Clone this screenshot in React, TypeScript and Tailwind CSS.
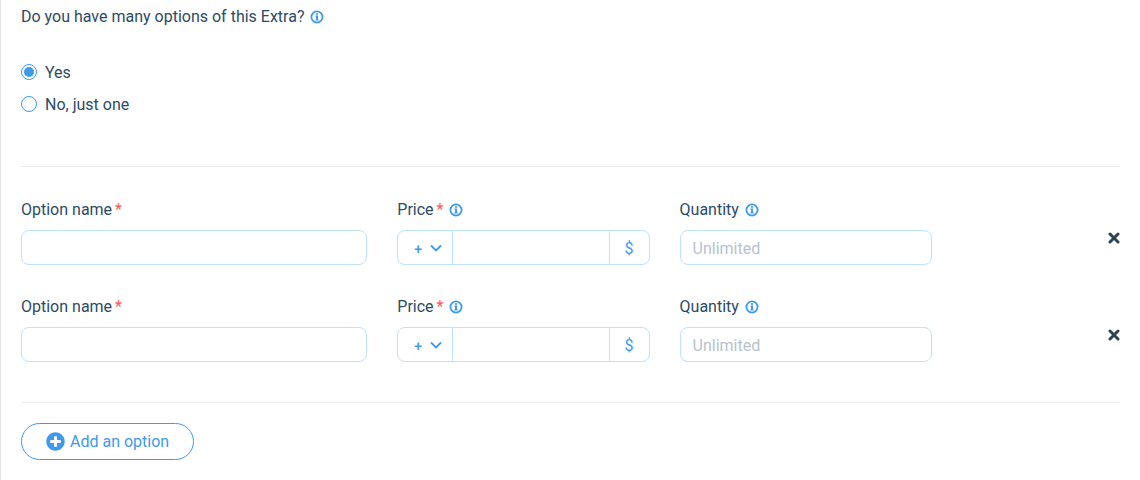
import React, { useId, useState } from "react";
import { FaPlusCircle } from "react-icons/fa";

function InfoIcon() {
  return (
    <svg viewBox="0 0 14 14" className="size-3.5 shrink-0 text-[#3d9aed]" fill="none" role="img" aria-label="More information">
      <circle cx="7" cy="7" r="5.6" stroke="currentColor" strokeWidth="1.8" />
      <path d="M6 3.2h2v1.5H6zM5.4 5.6H8v4h.7v1H5.3v-1H6V6.6h-.6z" fill="currentColor" />
    </svg>
  );
}

function CrossIcon() {
  return (
    <svg viewBox="0 0 12 12" className="size-3" fill="none" stroke="currentColor" strokeWidth="3" strokeLinecap="round" aria-hidden="true">
      <path d="M2 2 10 10M10 2 2 10" />
    </svg>
  );
}

function Required() {
  return <span className="ml-[3px] text-[#ff5656]">*</span>;
}

const field =
  "block h-[35px] w-full min-w-0 rounded-lg border border-[#bfe1fb] bg-white px-3 pt-0.5 text-[#2b4b65] outline-none placeholder:text-[#b8c2ce] focus:border-[#3d9aed]";

function OptionRow({ onRemove }: { onRemove: () => void }) {
  const id = useId();
  return (
    <div className="grid grid-cols-12 gap-x-[30px]">
      <div className="col-span-4">
        <div className="mb-2 flex h-6 items-center">
          <label htmlFor={`${id}-name`}>
            Option name
            <Required />
          </label>
        </div>
        <input id={`${id}-name`} type="text" required className={field} />
      </div>

      <div className="col-span-3">
        <div className="mb-2 flex h-6 items-center gap-1.5">
          <label htmlFor={`${id}-price`}>
            Price
            <Required />
          </label>
          <InfoIcon />
        </div>
        <div className="flex h-[35px] overflow-hidden rounded-lg border border-[#bfe1fb] text-[#3d9aed] focus-within:border-[#3d9aed]">
          <div className="relative w-[55px] shrink-0 border-r border-[#bfe1fb]">
            <select
              aria-label="Price sign"
              className="h-full w-full appearance-none bg-transparent pt-0.5 pl-4 text-sm font-medium outline-none"
            >
              <option>+</option>
              <option>-</option>
            </select>
            <svg
              viewBox="0 0 12 8"
              className="pointer-events-none absolute top-[13px] right-2.5 h-2 w-3"
              fill="none"
              stroke="currentColor"
              strokeWidth="1.8"
              aria-hidden="true"
            >
              <path d="M1 1.5 6 6.5 11 1.5" />
            </svg>
          </div>
          <input
            id={`${id}-price`}
            type="text"
            inputMode="decimal"
            required
            className="min-w-0 flex-1 bg-white px-3 text-[#2b4b65] outline-none"
          />
          <span className="flex w-10 shrink-0 items-center justify-center border-l border-[#bfe1fb] pt-0.5">$</span>
        </div>
      </div>

      <div className="col-span-3">
        <div className="mb-2 flex h-6 items-center gap-1.5">
          <label htmlFor={`${id}-quantity`}>Quantity</label>
          <InfoIcon />
        </div>
        <input id={`${id}-quantity`} type="text" inputMode="numeric" placeholder="Unlimited" className={field} />
      </div>

      <div className="col-span-2 flex items-center justify-end pt-3">
        <button type="button" aria-label="Remove option" onClick={onRemove} className="cursor-pointer text-[#2b4358]">
          <CrossIcon />
        </button>
      </div>
    </div>
  );
}

const radio =
  "mt-[3px] size-4 shrink-0 appearance-none rounded-full border border-[#3d9aed] bg-white checked:bg-[#3d9aed] checked:bg-clip-content checked:p-0.5";

export default function App() {
  const [many, setMany] = useState(true);
  const [rows, setRows] = useState([1, 2]);

  return (
    <form
      className="min-h-screen border-l border-[#e6e7ee] bg-white px-5 pt-[5px] pb-5 font-['Roboto',sans-serif] text-base text-[#2b4b65]"
      onSubmit={(e) => e.preventDefault()}
    >
      <fieldset>
        <legend className="flex items-center gap-1.5">
          Do you have many options of this Extra?
          <InfoIcon />
        </legend>
        <div className="flex flex-col items-start gap-2 pt-8">
          <label className="flex items-start gap-2">
            <input type="radio" name="many" checked={many} onChange={() => setMany(true)} className={radio} />
            Yes
          </label>
          <label className="flex items-start gap-2">
            <input type="radio" name="many" checked={!many} onChange={() => setMany(false)} className={radio} />
            No, just one
          </label>
        </div>
      </fieldset>

      <hr className="mt-[49px] border-[#ebedef]" />

      <div className="flex flex-col gap-[30px] pt-[31px] pb-10">
        {rows.map((row) => (
          <OptionRow key={row} onRemove={() => setRows(rows.filter((r) => r !== row))} />
        ))}
      </div>

      <hr className="border-[#ebedef]" />

      <button
        type="button"
        onClick={() => setRows([...rows, Math.max(0, ...rows) + 1])}
        className="mt-5 flex h-[37px] cursor-pointer items-center gap-[5px] rounded-full border border-[#3d9aed] px-6 text-[#3d9aed]"
      >
        <FaPlusCircle className="size-[19px]" />
        Add an option
      </button>
    </form>
  );
}
